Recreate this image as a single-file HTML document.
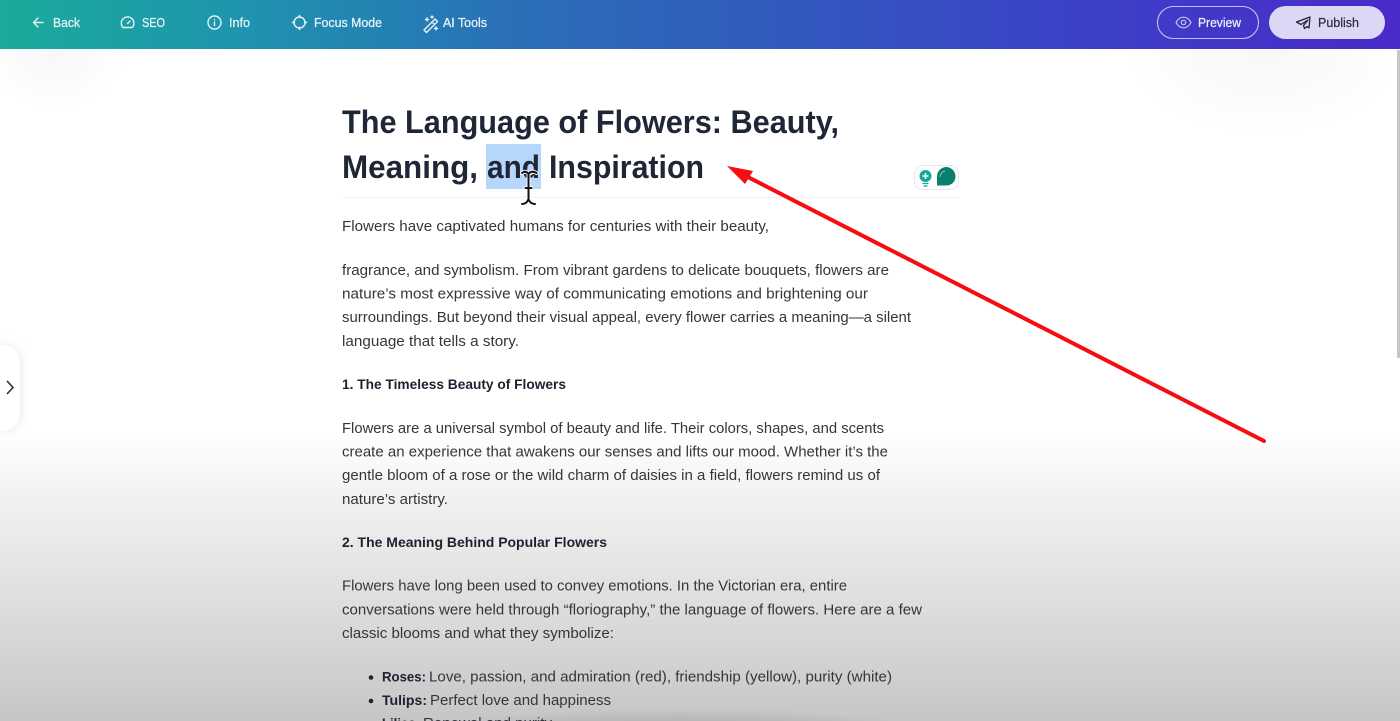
<!DOCTYPE html>
<html lang="en"><head><meta charset="utf-8"><title>The Language of Flowers</title>
<style>
html,body{margin:0;padding:0;width:1400px;height:721px;overflow:hidden;background:#fff}
svg{display:block;position:absolute;left:0;top:0}
text{font-family:"Liberation Sans",sans-serif}
.b{font-size:14.5px;fill:#33363d}
.h{font-size:14px;font-weight:700;fill:#1d2230}
.t{font-size:32px;font-weight:700;fill:#1f2636}
.n{font-size:12.5px;fill:#e6f2f6;stroke:#e6f2f6;stroke-width:.25px}
</style></head><body>
<svg width="1400" height="721" viewBox="0 0 1400 721" xmlns="http://www.w3.org/2000/svg">
<defs>
<linearGradient id="hd" x1="0" x2="1" y1="0" y2="0">
<stop offset="0" stop-color="#1aab9b"/><stop offset=".18" stop-color="#1f93af"/><stop offset=".37" stop-color="#2a6fb7"/><stop offset=".6" stop-color="#3455c0"/><stop offset=".8" stop-color="#3d3ec8"/><stop offset="1" stop-color="#4a2ac9"/>
</linearGradient>
<linearGradient id="bg" x1="0" x2="0" y1="0" y2="1">
<stop offset="0" stop-color="#fff"/><stop offset=".6" stop-color="#fff"/><stop offset=".7" stop-color="#f0f0f0"/><stop offset=".83" stop-color="#dfdfdf"/><stop offset="1" stop-color="#c6c6c6"/>
</linearGradient>
<radialGradient id="sh"><stop offset="0" stop-color="#000" stop-opacity=".1"/><stop offset=".6" stop-color="#000" stop-opacity=".06"/><stop offset="1" stop-color="#000" stop-opacity="0"/></radialGradient>
<radialGradient id="gl"><stop offset="0" stop-color="#f8f8fa"/><stop offset=".55" stop-color="#fbfbfc"/><stop offset="1" stop-color="#fff"/></radialGradient>
<filter id="bl" x="-50%" y="-50%" width="200%" height="200%"><feGaussianBlur stdDeviation="5"/></filter>
</defs>
<rect width="1400" height="721" fill="url(#bg)"/>
<ellipse cx="55" cy="50" rx="70" ry="60" fill="url(#gl)"/>
<ellipse cx="1265" cy="50" rx="140" ry="85" fill="url(#gl)"/>
<ellipse cx="680" cy="730" rx="240" ry="22" fill="url(#sh)"/>

<rect width="1400" height="49" fill="url(#hd)"/>
<!-- nav icons -->
<g fill="none" stroke="#e6f2f6" stroke-width="1.4" stroke-linecap="round" stroke-linejoin="round">
<path d="M43 22.500H33.500M38 18l-4.500 4.500L38 27"/>
<path d="M123 27.500a6.300 6.300 0 1 1 9.200 0zM127.600 23.500l2.400-2.400"/>
<circle cx="214.500" cy="22.500" r="6.500"/><path d="M214.500 22v3.500M214.500 19.500v.1"/>
<circle cx="299.500" cy="22.500" r="5.500"/><path d="M299.500 15.500v2M299.500 27.500v2M292.500 22.500h2M304.500 22.500h2"/>
<path d="M424 30l11-11 2.500 2.500-11 11zM432 22l2.500 2.500M427 18v3M425.500 19.500h3M436 27v3M434.500 28.500h3M432 16v2M431 17h2"/>
<!-- preview -->
<path d="M1176 22.500c2-3.600 4.500-5.300 7.500-5.300s5.500 1.700 7.500 5.300c-2 3.600-4.500 5.300-7.500 5.300s-5.500-1.700-7.500-5.300z" stroke="#c9c6f0" stroke-width="1.200"/><circle cx="1183.500" cy="22.500" r="2.200" stroke="#c9c6f0" stroke-width="1.200"/>
</g>
<text class="n" x="53" y="27" textLength="27" lengthAdjust="spacingAndGlyphs">Back</text>
<text class="n" x="142" y="27" textLength="23" lengthAdjust="spacingAndGlyphs">SEO</text>
<text class="n" x="229" y="27" textLength="21" lengthAdjust="spacingAndGlyphs">Info</text>
<text class="n" x="314" y="27" textLength="68" lengthAdjust="spacingAndGlyphs">Focus Mode</text>
<text class="n" x="443" y="27" textLength="44" lengthAdjust="spacingAndGlyphs">AI Tools</text>

<rect x="1157.500" y="6.500" width="101" height="32" rx="16" fill="none" stroke="#c5c2ee" stroke-width="1.100"/>
<text class="n" x="1198" y="27" textLength="43" lengthAdjust="spacingAndGlyphs">Preview</text>
<rect x="1269" y="6" width="116" height="33" rx="16.500" fill="#dcd7f5"/>
<g fill="none" stroke="#23233a" stroke-width="1.300" stroke-linejoin="round" stroke-linecap="round"><path d="M1310 17l-13.500 5 4.500 2.500 7-4.500-4.500 5.500 1 3 2.500-2 2 1.500z"/></g>
<text x="1318" y="27" font-size="12.500" fill="#2b2a40" stroke="#2b2a40" stroke-width=".2" textLength="41" lengthAdjust="spacingAndGlyphs">Publish</text>

<!-- scrollbar -->
<rect x="1397" y="50" width="3" height="308" fill="#c6c6c6"/>

<!-- side tab -->
<path d="M0 345h6q15 3 15 18v50q0 15-15 18H0z" fill="#dde0ee" filter="url(#bl)" opacity=".7"/>
<path d="M0 345h4q16 3 16 18v50q0 15-16 18H0z" fill="#fff"/>
<path d="M7 381l6 6.500-6 6.500" fill="none" stroke="#2e3038" stroke-width="1.600"/>

<!-- title -->
<rect x="486" y="144" width="55" height="45" fill="#b6d6fb"/>
<text class="t" x="342" y="133" textLength="497" lengthAdjust="spacingAndGlyphs">The Language of Flowers: Beauty,</text>
<text class="t" x="342" y="178" textLength="136" lengthAdjust="spacingAndGlyphs">Meaning,</text>
<text class="t" x="487" y="178" textLength="53" lengthAdjust="spacingAndGlyphs">and</text>
<text class="t" x="549" y="178" textLength="155" lengthAdjust="spacingAndGlyphs">Inspiration</text>
<rect x="342" y="197" width="618" height="1" fill="#f1f1f1"/>

<!-- grammar widget -->
<rect x="914.500" y="165.500" width="44" height="24" rx="8" fill="#fff" stroke="#e8e8e8" stroke-width="1"/>
<circle cx="925.500" cy="176" r="6" fill="#12a89a"/><path d="M925.500 173v6M922.500 176h6" stroke="#fff" stroke-width="1.600"/><path d="M922.500 183.500h6M923.500 186h4" stroke="#12a89a" stroke-width="1.300"/>
<path d="M946 167a9.500 9.500 0 0 1 9.500 9.500c0 5-4 9-9 9h-9.500v-9a9.500 9.500 0 0 1 9-9.500z" fill="#0b7f6e"/>
<path d="M940 177a6 6 0 0 1 5-6" fill="none" stroke="#7fcdbd" stroke-width="1"/>

<!-- body -->
<text class="b" x="342" y="231" textLength="427" lengthAdjust="spacingAndGlyphs">Flowers have captivated humans for centuries with their beauty,</text>
<text class="b" x="342" y="275" textLength="547" lengthAdjust="spacingAndGlyphs">fragrance, and symbolism. From vibrant gardens to delicate bouquets, flowers are</text>
<text class="b" x="342" y="298.500" textLength="526" lengthAdjust="spacingAndGlyphs">nature’s most expressive way of communicating emotions and brightening our</text>
<text class="b" x="342" y="322" textLength="569" lengthAdjust="spacingAndGlyphs">surroundings. But beyond their visual appeal, every flower carries a meaning—a silent</text>
<text class="b" x="342" y="346" textLength="177" lengthAdjust="spacingAndGlyphs">language that tells a story.</text>
<text class="h" x="342" y="389" textLength="224" lengthAdjust="spacingAndGlyphs">1. The Timeless Beauty of Flowers</text>
<text class="b" x="342" y="433" textLength="542" lengthAdjust="spacingAndGlyphs">Flowers are a universal symbol of beauty and life. Their colors, shapes, and scents</text>
<text class="b" x="342" y="456.500" textLength="546" lengthAdjust="spacingAndGlyphs">create an experience that awakens our senses and lifts our mood. Whether it’s the</text>
<text class="b" x="342" y="480" textLength="538" lengthAdjust="spacingAndGlyphs">gentle bloom of a rose or the wild charm of daisies in a field, flowers remind us of</text>
<text class="b" x="342" y="504" textLength="106" lengthAdjust="spacingAndGlyphs">nature’s artistry.</text>
<text class="h" x="342" y="547" textLength="265" lengthAdjust="spacingAndGlyphs">2. The Meaning Behind Popular Flowers</text>
<text class="b" x="342" y="590.500" textLength="505" lengthAdjust="spacingAndGlyphs">Flowers have long been used to convey emotions. In the Victorian era, entire</text>
<text class="b" x="342" y="614.500" textLength="580" lengthAdjust="spacingAndGlyphs">conversations were held through “floriography,” the language of flowers. Here are a few</text>
<text class="b" x="342" y="638" textLength="272" lengthAdjust="spacingAndGlyphs">classic blooms and what they symbolize:</text>
<circle cx="371" cy="677.500" r="2.300" fill="#1d2230"/>
<circle cx="371" cy="701" r="2.300" fill="#1d2230"/>
<text class="h" x="382" y="681.500" textLength="44" lengthAdjust="spacingAndGlyphs">Roses:</text>
<text class="b" x="429" y="681.500" textLength="463" lengthAdjust="spacingAndGlyphs">Love, passion, and admiration (red), friendship (yellow), purity (white)</text>
<text class="h" x="382" y="705" textLength="45" lengthAdjust="spacingAndGlyphs">Tulips:</text>
<text class="b" x="430" y="705" textLength="181" lengthAdjust="spacingAndGlyphs">Perfect love and happiness</text>
<text class="h" x="382" y="728" textLength="38" lengthAdjust="spacingAndGlyphs">Lilies:</text>
<text class="b" x="423" y="728" textLength="129" lengthAdjust="spacingAndGlyphs">Renewal and purity</text>

<!-- arrow -->
<path d="M1264 441L742 174" stroke="#f50d12" stroke-width="4" stroke-linecap="round"/>
<path d="M727 166L753 171L745 184z" fill="#f50d12"/>

<!-- I-beam cursor -->
<g fill="none" stroke-linecap="round">
<path d="M522 173q3.500-3 6.500 1q3-4 8-1M528.500 175v23M522 204q5 0 6.500-5q1.500 5 6.500 5M525.500 188h6" stroke="#fff" stroke-width="4" opacity=".9"/>
<path d="M522 173q3.500-3 6.500 1q3-4 8-1M528.500 175v23M522 204q5 0 6.500-5q1.500 5 6.500 5M525.500 188h6" stroke="#111" stroke-width="2"/>
</g>
</svg>
</body></html>
